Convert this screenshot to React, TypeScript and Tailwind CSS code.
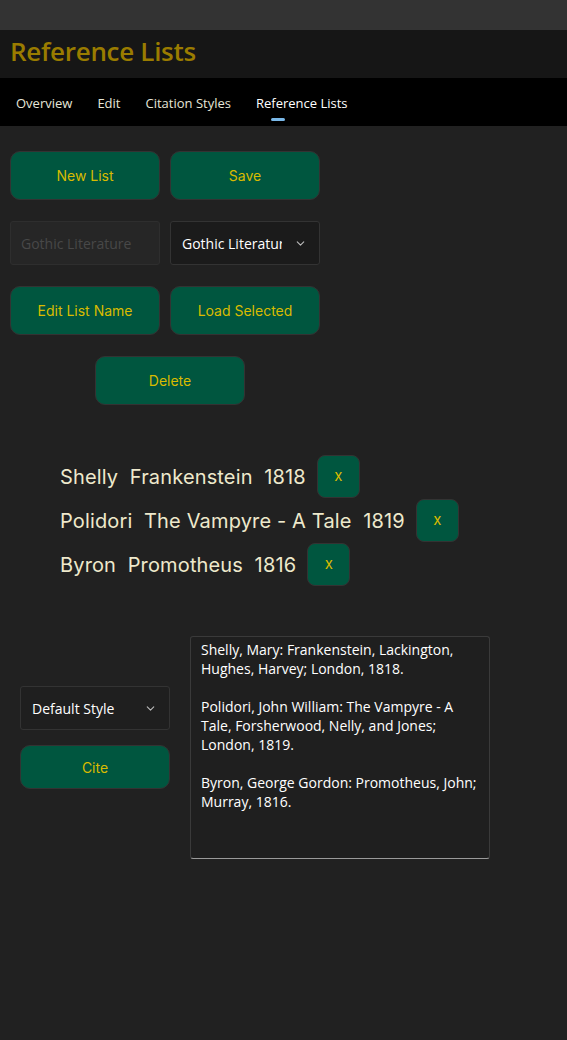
import { ChevronDown } from "lucide-react";

const btn =
  "h-[49px] w-[150px] rounded-[10px] border border-[#333] bg-[#00563f] text-[14px] text-[#d9bb00] font-['Inter',sans-serif]";

const refs = [
  { author: "Shelly", title: "Frankenstein", year: "1818" },
  { author: "Polidori", title: "The Vampyre - A Tale", year: "1819" },
  { author: "Byron", title: "Promotheus", year: "1816" },
];

const App = () => {
  return (
    <div className="min-h-[1040px] w-[567px] bg-[#212121] font-['Open_Sans',sans-serif]">
      <div className="h-[30px] bg-[#333333]" />
      <div className="h-[48px] bg-[#161616] px-[10px] flex items-center pb-[5px]">
        <h1 className="text-[26px] font-semibold text-[#9a7c00] font-['Open_Sans',sans-serif] tracking-[-0.3px]">Reference Lists</h1>
      </div>
      <div className="h-[48px] bg-black flex items-center pl-[16px] pt-[3px] gap-[25px] text-[13px] text-[#e6e6d8]">
        <span>Overview</span>
        <span>Edit</span>
        <span>Citation Styles</span>
        <span className="relative text-white">
          Reference Lists
          <span className="absolute left-[15px] top-[24px] h-[3px] w-[14px] rounded-full bg-[#7ab8e8]" />
        </span>
      </div>

      <div className="px-[10px] pt-[25px]">
        <div className="grid grid-cols-[150px_150px] gap-x-[10px] gap-y-[21px]">
          <button className={btn}>New List</button>
          <button className={btn}>Save</button>
          <input
            placeholder="Gothic Literature"
            className="h-[44px] w-[150px] rounded-[3px] border border-[#2e2e2e] bg-[#262626] px-[10px] text-[14px] placeholder:text-[#484848] outline-none"
          />
          <div className="h-[44px] w-[150px] rounded-[3px] border border-[#333] bg-[#1b1b1b] pl-[11px] pr-[12px] flex items-center justify-between text-[14px] text-white">
            <span className="w-[100px] overflow-hidden whitespace-nowrap">Gothic Literature</span>
            <ChevronDown size={13} className="text-[#bbb]" />
          </div>
          <button className={btn}>Edit List Name</button>
          <button className={btn}>Load Selected</button>
        </div>
        <div className="mt-[21px] pl-[85px]">
          <button className={btn}>Delete</button>
        </div>

        <div className="mt-[50px] pl-[50px] flex flex-col gap-[1px]">
          {refs.map((r) => (
            <div key={r.author} className="flex items-center gap-[11px]">
              <span className="text-[20px] tracking-[0.15px] text-[#eee9cc] font-['Inter',sans-serif] whitespace-pre">
                {r.author}  {r.title}  {r.year}
              </span>
              <button className="h-[43px] w-[43px] rounded-[8px] border border-[#333] bg-[#00563f] text-[15px] text-[#d9bb00] font-['Inter',sans-serif]">
                x
              </button>
            </div>
          ))}
        </div>

        <div className="mt-[50px] pl-[10px] flex items-center gap-[20px]">
          <div className="flex flex-col gap-[15px] mt-[-20px]">
            <div className="h-[44px] w-[150px] rounded-[3px] border border-[#333] bg-[#1f1f1f] pl-[11px] pr-[12px] flex items-center justify-between text-[14px] text-white">
              <span>Default Style</span>
              <ChevronDown size={13} className="text-[#bbb]" />
            </div>
            <button className={btn.replace("h-[49px]", "h-[44px]")}>Cite</button>
          </div>
          <div className="h-[223px] w-[300px] rounded-[3px] border border-[#3a3a3a] border-b-[#9a9a9a] bg-[#1f1f1f] px-[10px] py-[3px] text-[14px] leading-[19px] text-white">
            <p>Shelly, Mary: Frankenstein, Lackington, Hughes, Harvey; London, 1818.</p>
            <p className="mt-[19px]">Polidori, John William: The Vampyre - A Tale, Forsherwood, Nelly, and Jones; London, 1819.</p>
            <p className="mt-[19px]">Byron, George Gordon: Promotheus, John; Murray, 1816.</p>
          </div>
        </div>
      </div>
    </div>
  );
};

export default App;
